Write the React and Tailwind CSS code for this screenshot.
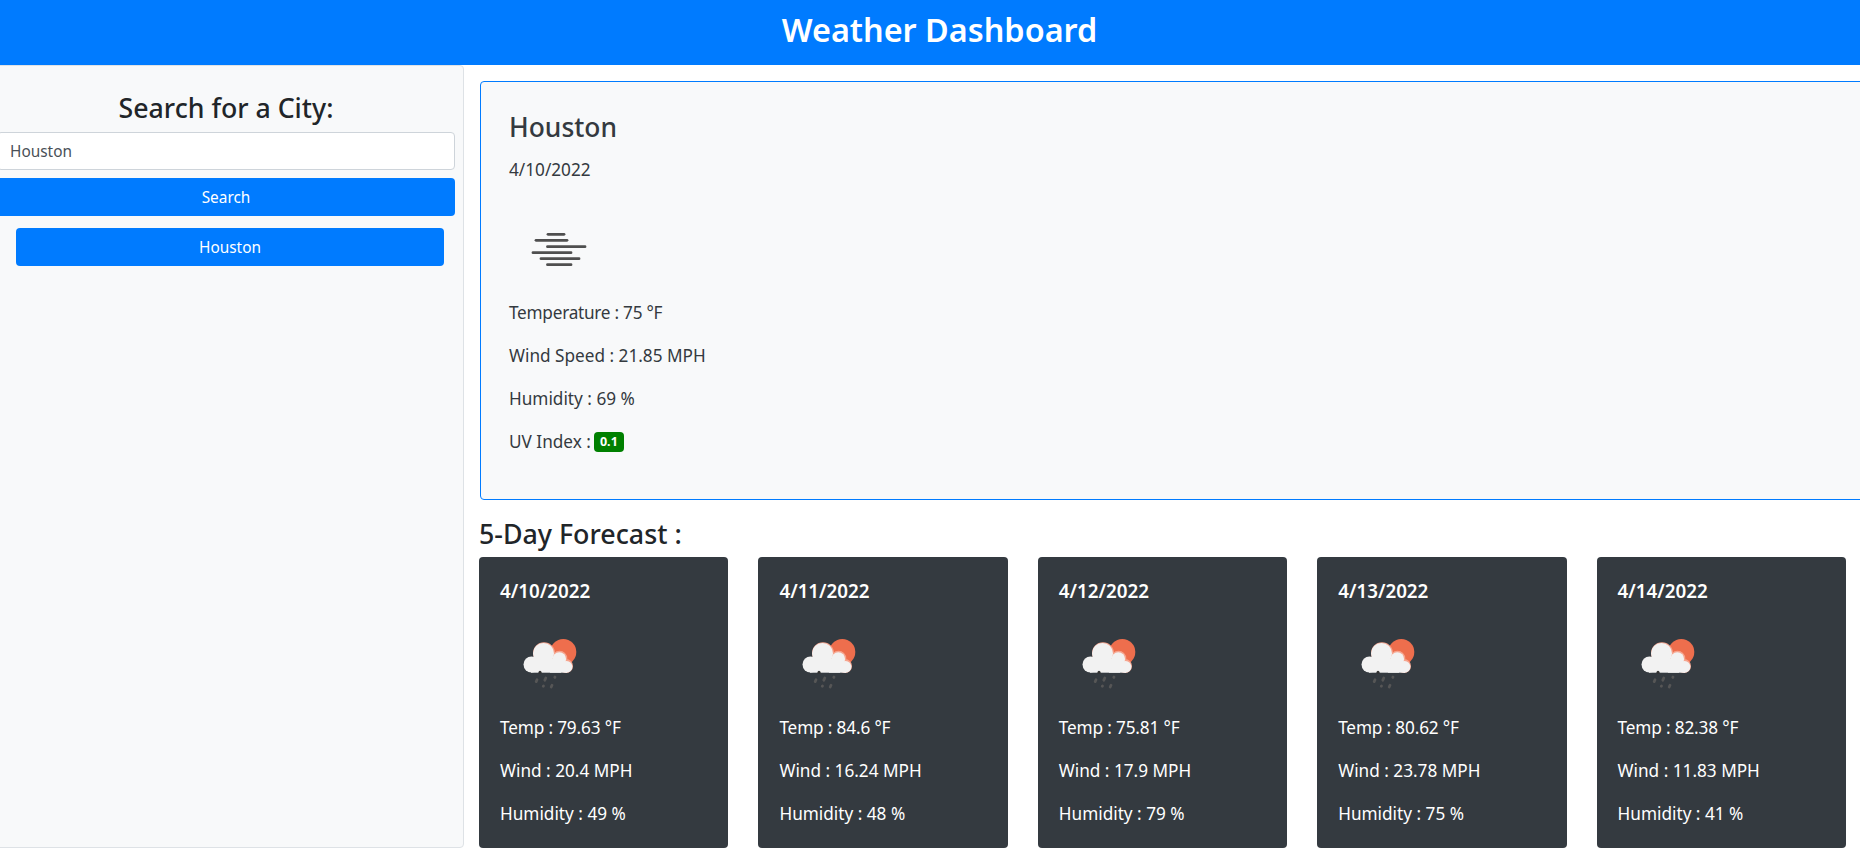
const FONT = "font-['Noto_Sans','Open_Sans',sans-serif]";

function FogIcon() {
  const bars = [
    [38, 56, 34.3],
    [26, 59, 40.3],
    [37.5, 77, 46.7],
    [23, 63, 52.7],
    [31, 71, 58.7],
    [37.5, 63, 64.7],
  ];
  return (
    <svg width="100" height="100" viewBox="0 0 100 100" className="block">
      {bars.map(([a, b, y], i) => (
        <line key={i} x1={a + 1} x2={b - 1} y1={y} y2={y} stroke="#4f4f4f" strokeWidth="2.8" strokeLinecap="round" />
      ))}
    </svg>
  );
}

function RainIcon() {
  return (
    <svg width="100" height="100" viewBox="0 0 100 100" className="block">
      <circle cx="63.3" cy="38" r="13" fill="#ee6e4d" />
      <g fill="#f6a58f">
        <circle cx="44" cy="39.3" r="11" />
        <circle cx="59.5" cy="44.5" r="7.8" />
        <circle cx="66" cy="52" r="7" />
      </g>
      <g fill="#f2f2f2">
        <circle cx="43.5" cy="39.5" r="10.5" />
        <circle cx="31.5" cy="50.5" r="8" />
        <circle cx="59.3" cy="45" r="6.8" />
        <circle cx="66.5" cy="52.8" r="5.9" />
        <rect x="31" y="45" width="30" height="13.7" />
        <rect x="50" y="50" width="17" height="8.7" />
      </g>
      <circle cx="40" cy="58.3" r="1.5" fill="#333" />
      <g stroke="#565656" strokeWidth="2.8" strokeLinecap="round">
        <line x1="36.2" y1="67.6" x2="37" y2="65.8" />
        <line x1="44.8" y1="66.2" x2="45.8" y2="64" />
        <line x1="54.8" y1="63.4" x2="55" y2="63.1" />
        <line x1="43.3" y1="72.2" x2="43.5" y2="72" />
        <line x1="51.2" y1="73" x2="52" y2="71.2" />
      </g>
    </svg>
  );
}

const days = [
  ["4/10/2022", "79.63", "20.4", "49"],
  ["4/11/2022", "84.6", "16.24", "48"],
  ["4/12/2022", "75.81", "17.9", "79"],
  ["4/13/2022", "80.62", "23.78", "75"],
  ["4/14/2022", "82.38", "11.83", "41"],
];

function ForecastCard({ d }) {
  return (
    <div className="w-[249.4px] h-[291px] shrink-0 bg-[#343a40] text-white rounded-[4px] pl-[21px] pt-[22px]">
      <h5 className="text-[18.8px] leading-[24px] font-semibold">{d[0]}</h5>
      <div className="mt-[11px]"><RainIcon /></div>
      <p className="text-[17.2px] leading-[24px] mt-[2px] mb-[19px] tracking-[-0.15px]">Temp : {d[1]} °F</p>
      <p className="text-[17.2px] leading-[24px] mb-[19px]">Wind : {d[2]} MPH</p>
      <p className="text-[17.2px] leading-[24px]">Humidity : {d[3]} %</p>
    </div>
  );
}

export default function App() {
  return (
    <div className={`${FONT} w-[1860px] h-[865px] overflow-hidden bg-white text-[#212529]`}>
      <header className="h-[65px] pb-[7px] pl-[19px] bg-[#007bff] text-white flex items-center justify-center">
        <h1 className="text-[32.4px] font-semibold leading-none">Weather Dashboard</h1>
      </header>
      <div className="flex -ml-[15px] w-[1990px]">
        <aside className="w-[479px] h-[783px] shrink-0 bg-[#f8f9fa] border border-[#dee2e6] rounded-[4px] pl-[11px] pr-[8px] pt-[23px]">
          <h4 className="text-[26.7px] leading-[38px] font-medium text-center mb-[5px] text-[#212529]">Search for a City:</h4>
          <input
            readOnly
            value="Houston"
            className="block w-full h-[38px] px-[12px] bg-white border border-[#ced4da] rounded-[4px] text-[15.4px] text-[#495057] outline-none"
          />
          <button className="block w-full h-[38px] mt-[8px] pt-[2px] bg-[#007bff] text-white rounded-[4px] text-[15.4px]">Search</button>
          <button className="block w-[428px] h-[38px] mt-[12px] ml-[19px] pt-[2px] bg-[#007bff] text-white rounded-[4px] text-[15.4px]">Houston</button>
        </aside>
        <main className="flex-1 pl-[15px] pt-[16px]">
          <section className="h-[419px] w-[1500px] ml-[1px] bg-[#f8f9fa] border border-[#007bff] rounded-[4px] pl-[28px] pt-[28px] text-[#343a40]">
            <h3 className="text-[26.4px] leading-[34px] font-medium">Houston</h3>
            <p className="text-[17.2px] leading-[24px] mt-[14px]">4/10/2022</p>
            <div className="mt-[18px]"><FogIcon /></div>
            <p className="text-[17.2px] leading-[24px] mt-[1px] mb-[19px] tracking-[-0.25px]">Temperature : 75 °F</p>
            <p className="text-[17.2px] leading-[24px] mb-[19px]">Wind Speed : 21.85 MPH</p>
            <p className="text-[17.2px] leading-[24px] mb-[19px]">Humidity : 69 %</p>
            <p className="text-[17.2px] leading-[24px] flex items-center">
              <span>UV Index :</span>
              <span className="ml-[3px] w-[30px] h-[20px] rounded-[4px] bg-[#008000] text-white text-[12.5px] leading-none font-bold flex items-center justify-center">0.1</span>
            </p>
          </section>
          <h4 className="text-[26.8px] leading-[32px] font-medium mt-[18px] mb-[7px] text-[#212529]">5-Day Forecast :</h4>
          <div className="flex gap-[30px]">
            {days.map((d) => <ForecastCard key={d[0]} d={d} />)}
          </div>
        </main>
      </div>
    </div>
  );
}
